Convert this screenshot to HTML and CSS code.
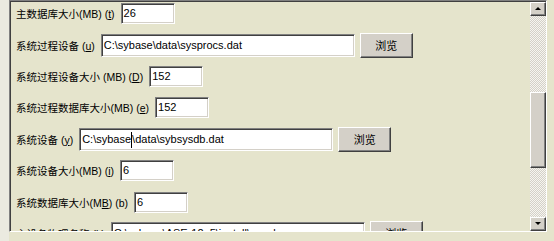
FILE: index.html
```html
<!DOCTYPE html>
<html lang="zh-CN">
<head>
    <meta charset="UTF-8">
    <title>服务器设置</title>
    <link rel="stylesheet" href="styles.css">
</head>
<body>
    <div class="panel">
        <!-- área rolada com os campos -->
        <div class="view">
            <div class="form">
                <div class="row">
                    <span class="label">主数据库大小(MB) (<u>t</u>)</span>
                    <div class="field small">26</div>
                </div>
                <div class="row">
                    <span class="label">系统过程设备 (<u>u</u>)</span>
                    <div class="field wide">C:\sybase\data\sysprocs.dat</div>
                    <button class="btn">浏览</button>
                </div>
                <div class="row">
                    <span class="label">系统过程设备大小 (MB) (<u>D</u>)</span>
                    <div class="field small">152</div>
                </div>
                <div class="row">
                    <span class="label">系统过程数据库大小(MB) (<u>e</u>)</span>
                    <div class="field small">152</div>
                </div>
                <div class="row">
                    <span class="label">系统设备 (<u>y</u>)</span>
                    <div class="field wide">C:\sybase<span class="caret"></span>\data\sybsysdb.dat</div>
                    <button class="btn">浏览</button>
                </div>
                <div class="row">
                    <span class="label">系统设备大小(MB) (<u>i</u>)</span>
                    <div class="field small">6</div>
                </div>
                <div class="row">
                    <span class="label">系统数据库大小(M<u>B</u>) (b)</span>
                    <div class="field small">6</div>
                </div>
                <div class="row">
                    <span class="label">主设备物理名称 (<u>k</u>)</span>
                    <div class="field wide">C:\sybase\ASE-12_5\install\errorlog</div>
                    <button class="btn">浏览</button>
                </div>
            </div>
        </div>

        <!-- barra de rolagem -->
        <div class="scrollbar">
            <div class="sb-btn up"></div>
            <div class="sb-track">
                <div class="sb-thumb"></div>
            </div>
            <div class="sb-btn down"></div>
        </div>
    </div>
</body>
</html>
```

FILE: styles.css
```css
/* Janela de configuração, estilo clássico */
body {
    margin: 0;
    background: linear-gradient(to right, #ebeae0 9px, #e5e4cc 9px);
    font-family: "Liberation Sans", "Noto Sans CJK SC", sans-serif;
    color: #000;
}
.panel {
    display: flex;
    box-sizing: border-box;
    margin-left: 9px;
    width: 538px;
    height: 232px;
    background-color: #e5e4cc;
    border-style: solid;
    border-width: 1px;
    border-color: #808080 #fff #fff #808080;
    box-shadow: inset 1px 1px #404040;
}
.view {
    flex: 1;
    overflow: hidden;
    margin: 1px 0 0 1px;
}
.form {
    margin-top: -4px;
    padding-left: 5px;
}
.row {
    display: flex;
    align-items: center;
    height: 31.4px;
    white-space: nowrap;
}
.label {
    font-size: 10.5px;
    margin-right: 6px;
}
.field {
    box-sizing: border-box;
    height: 21px;
    line-height: 19px;
    padding-left: 2px;
    font-size: 11px;
    background-color: #fff;
    border: 1px solid;
    border-color: #808080 #fff #fff #808080;
    box-shadow: inset 1px 1px #404040, inset -1px -1px #d4d0c8;
    overflow: hidden;
}
.small {
    width: 54px;
}
.wide {
    width: 254px;
    height: 23px;
    line-height: 21px;
}
.caret {
    display: inline-block;
    width: 1px;
    height: 16px;
    background-color: #000;
    vertical-align: middle;
}
.btn {
    box-sizing: border-box;
    width: 53px;
    height: 25px;
    margin-left: 5px;
    padding: 0;
    font-family: "Noto Sans CJK SC", sans-serif;
    font-size: 11px;
    color: #000;
    background-color: #d4d0c8;
    border: 1px solid;
    border-color: #fff #404040 #404040 #fff;
    box-shadow: inset -1px -1px #808080;
}
.scrollbar {
    display: flex;
    flex-direction: column;
    width: 16px;
    margin-top: 1px;
}
.sb-btn, .sb-thumb {
    box-sizing: border-box;
    background-color: #d4d0c8;
    border: 1px solid;
    border-color: #fff #404040 #404040 #fff;
    box-shadow: inset -1px -1px #808080;
}
.sb-btn {
    position: relative;
    height: 14px;
}
.sb-btn::after {
    content: "";
    position: absolute;
    left: 4px;
    top: 4px;
    border-left: 3px solid transparent;
    border-right: 3px solid transparent;
}
.up::after {
    border-bottom: 3px solid #000;
}
.down::after {
    border-top: 3px solid #000;
}
.sb-track {
    flex: 1;
    background: repeating-conic-gradient(#d4d0c8 0 25%, #f6f5f0 0 50%) 0 0 / 2px 2px;
}
.sb-thumb {
    margin-top: 76px;
    height: 76px;
}
```
